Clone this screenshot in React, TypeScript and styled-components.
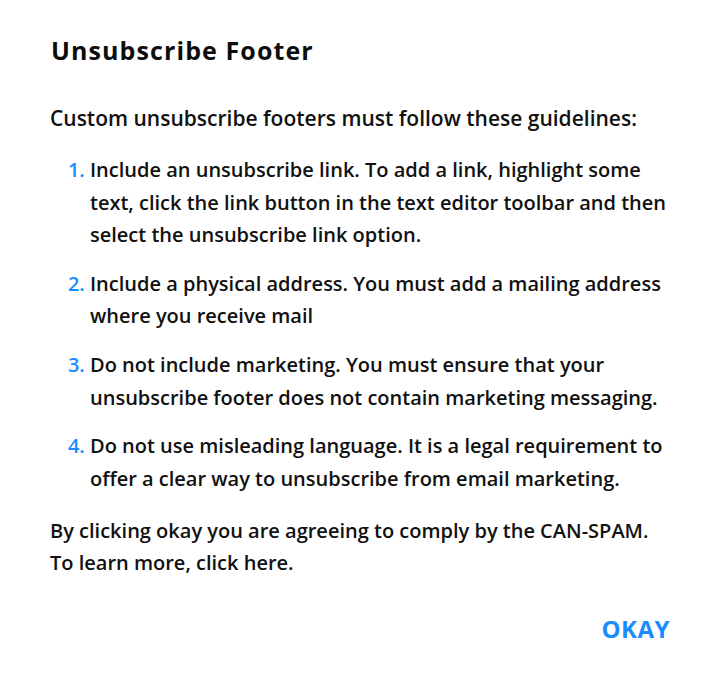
import React from "react";
import styled, { createGlobalStyle } from "styled-components";

const Global = createGlobalStyle`
  html, body { margin: 0; padding: 0; background: #ffffff; }
  body { font-family: "Open Sans", "Noto Sans", sans-serif; color: #111111; }
`;

const Dialog = styled.div`
  box-sizing: border-box;
  width: 725px;
  padding: 33px 50px 0 50px;
  display: flex;
  flex-direction: column;
`;

const Title = styled.h2`
  margin: 0 0 0 1px;
  font-size: 25px;
  font-weight: 700;
  letter-spacing: 1.1px;
  line-height: 35px;
  color: #0d0d0d;
`;

const Text = styled.p<{ $size?: number }>`
  margin: 0;
  font-size: ${(p) => p.$size ?? 20}px;
  font-weight: 600;
  line-height: 32.5px;
  color: #111111;
`;

const Intro = styled(Text)`
  margin-top: 34px;
`;

const List = styled.ol`
  margin: 19.5px 0 0;
  padding: 0 0 0 40px;
  display: flex;
  flex-direction: column;
  gap: 16.3px;
  font-size: 20px;
  font-weight: 600;
  line-height: 32.5px;
  color: #111111;
  li::marker { color: #1a8cff; }
`;

const Outro = styled(Text)`
  margin-top: 19.5px;
`;

const Actions = styled.div`
  display: flex;
  justify-content: flex-end;
  margin-top: 32.5px;
  padding-right: 5px;
`;

const OkButton = styled.button`
  border: none;
  background: none;
  padding: 0;
  font-family: inherit;
  font-size: 24px;
  font-weight: 700;
  letter-spacing: 0.5px;
  line-height: 34px;
  color: #1a8cff;
  cursor: pointer;
`;

const items = [
  "Include an unsubscribe link. To add a link, highlight some text, click the link button in the text editor toolbar and then select the unsubscribe link option.",
  "Include a physical address. You must add a mailing address where you receive mail",
  "Do not include marketing. You must ensure that your unsubscribe footer does not contain marketing messaging.",
  "Do not use misleading language. It is a legal requirement to offer a clear way to unsubscribe from email marketing.",
];

export default function App() {
  return (
    <>
      <Global />
      <Dialog>
        <Title>Unsubscribe Footer</Title>
        <Intro $size={21}>Custom unsubscribe footers must follow these guidelines:</Intro>
        <List>
          {items.map((t) => (
            <li key={t}>{t}</li>
          ))}
        </List>
        <Outro>
          By clicking okay you are agreeing to comply by the CAN-SPAM.
          <br />
          To learn more, click here.
        </Outro>
        <Actions>
          <OkButton>OKAY</OkButton>
        </Actions>
      </Dialog>
    </>
  );
}
